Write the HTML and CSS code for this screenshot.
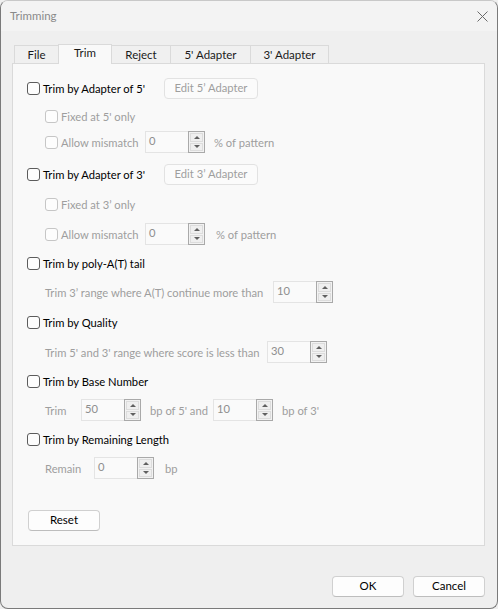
FILE: index.html
```html
<!DOCTYPE html>
<html>
<head>
<meta charset="utf-8">
<link rel="stylesheet" href="styles.css">
</head>
<body>
<div class="window">
  <div class="titlebar">
    <span class="title">Trimming</span>
    <svg class="close" width="11" height="11" viewBox="0 0 11 11"><path d="M0.5 0.5 L10.5 10.5 M10.5 0.5 L0.5 10.5" stroke="#6a6a6a" stroke-width="1" fill="none"/></svg>
  </div>
  <div class="tabs">
    <div class="tab w-file">File</div>
    <div class="tab active w-trim">Trim</div>
    <div class="tab w-reject">Reject</div>
    <div class="tab w-a5">5' Adapter</div>
    <div class="tab w-a3">3' Adapter</div>
  </div>
  <div class="panel">
    <div class="row">
      <label class="chk lbl-main"><span class="box"></span><span>Trim by Adapter of 5'</span></label>
      <span class="btn-edit">Edit 5’ Adapter</span>
    </div>
    <div class="row sub mt6">
      <label class="chk dis"><span class="box"></span><span>Fixed at 5' only</span></label>
    </div>
    <div class="row sub mt4">
      <label class="chk dis lbl-mis"><span class="box"></span><span>Allow mismatch</span></label>
      <div class="spin"><span class="field">0</span><span class="btns"><span class="up"></span><span class="down"></span></span></div>
      <span class="txt ml9">% of pattern</span>
    </div>

    <div class="row mt10">
      <label class="chk lbl-main"><span class="box"></span><span>Trim by Adapter of 3'</span></label>
      <span class="btn-edit">Edit 3’ Adapter</span>
    </div>
    <div class="row sub mt8">
      <label class="chk dis"><span class="box"></span><span>Fixed at 3’ only</span></label>
    </div>
    <div class="row sub mt8">
      <label class="chk dis lbl-mis"><span class="box"></span><span>Allow mismatch</span></label>
      <div class="spin"><span class="field">0</span><span class="btns"><span class="up"></span><span class="down"></span></span></div>
      <span class="txt ml9b">% of pattern</span>
    </div>

    <div class="row mt7">
      <label class="chk"><span class="box"></span><span>Trim by poly-A(T) tail</span></label>
    </div>
    <div class="row sub mt7">
      <span class="txt lbl-poly">Trim 3’ range where A(T) continue more than</span>
      <div class="spin"><span class="field">10</span><span class="btns"><span class="up"></span><span class="down"></span></span></div>
    </div>

    <div class="row mt8">
      <label class="chk"><span class="box"></span><span>Trim by Quality</span></label>
    </div>
    <div class="row sub mt8">
      <span class="txt lbl-qual">Trim 5' and 3' range where score is less than</span>
      <div class="spin"><span class="field">30</span><span class="btns"><span class="up"></span><span class="down"></span></span></div>
    </div>

    <div class="row mt7">
      <label class="chk"><span class="box"></span><span>Trim by Base Number</span></label>
    </div>
    <div class="row sub mt7">
      <span class="txt lbl-trim">Trim</span>
      <div class="spin"><span class="field">50</span><span class="btns"><span class="up"></span><span class="down"></span></span></div>
      <span class="txt ml9 lbl-bp5">bp of 5' and</span>
      <div class="spin"><span class="field">10</span><span class="btns"><span class="up"></span><span class="down"></span></span></div>
      <span class="txt ml9">bp of 3'</span>
    </div>

    <div class="row mt7">
      <label class="chk"><span class="box"></span><span>Trim by Remaining Length</span></label>
    </div>
    <div class="row sub mt7">
      <span class="txt lbl-remain">Remain</span>
      <div class="spin"><span class="field">0</span><span class="btns"><span class="up"></span><span class="down"></span></span></div>
      <span class="txt ml11">bp</span>
    </div>

    <div class="reset-row">
      <span class="btn">Reset</span>
    </div>
  </div>
  <div class="footer">
    <span class="btn">OK</span>
    <span class="btn">Cancel</span>
  </div>
</div>
</body>
</html>
```

FILE: styles.css
```css
* { box-sizing: border-box; }
html, body { margin: 0; padding: 0; background: #efefef; }
body {
  font-family: Lato, "Noto Sans", sans-serif;
  font-size: 11.2px;
  color: #000;
}
.window {
  width: 498px;
  height: 609px;
  border: 1px solid #7a7a7a;
  border-top-color: #c8c8c8;
  border-radius: 8px;
  background: #efefef;
  overflow: hidden;
  display: flex;
  flex-direction: column;
}
.titlebar {
  height: 30px;
  background: #f3f3f3;
  display: flex;
  align-items: center;
  justify-content: space-between;
  padding: 0 9px 0 9px;
  flex: none;
}
.title { color: #8a8a8a; line-height: 16px; font-size: 11.5px; }
.close { display: block; }

.tabs {
  display: flex;
  align-items: flex-end;
  height: 20px;
  margin-top: 12px;
  padding-left: 13px;
  flex: none;
}
.tab {
  height: 18px;
  border: 1px solid #dadada;
  border-bottom: none;
  background: #f0f0f0;
  color: #1a1a1a;
  display: flex;
  align-items: center;
  justify-content: center;
  margin-left: -1px;
  line-height: 16px;
  padding-top: 0;
  font-size: 11.5px;
}
.tab:first-child { margin-left: 0; }
.tab.active {
  height: 20px;
  background: #f9f9f9;
  position: relative;
  z-index: 1;
  margin-bottom: -1px;
  padding-top: 0;
  padding-bottom: 4px;
}
.w-file { width: 45px; }
.w-trim { width: 54px; }
.w-reject { width: 60px; }
.w-a5 { width: 81px; }
.w-a3 { width: 79px; }

.panel {
  margin: 0 12px 0 11px;
  height: 483px;
  border: 1px solid #dadada;
  background: #f9f9f9;
  padding: 13px 0 0 14px;
  flex: none;
}
.row {
  display: flex;
  align-items: center;
  height: 22px;
}
.sub { padding-left: 18px; }
.mt4 { margin-top: 4px; }
.mt6 { margin-top: 6px; }
.mt7 { margin-top: 7px; }
.mt8 { margin-top: 8px; }
.mt10 { margin-top: 10px; }

.chk {
  display: flex;
  align-items: center;
  white-space: nowrap;
  color: #000;
  flex: none;
}
.chk .box {
  width: 13px;
  height: 13px;
  border: 1px solid #5c5c5c;
  border-radius: 3px;
  background: #fdfdfd;
  margin-right: 3px;
  flex: none;
}
.chk.dis { color: #9e9e9e; }
.chk.dis .box { border-color: #c6c6c6; }
.lbl-main { width: 137px; }
.lbl-mis { width: 100px; }

.txt { color: #9e9e9e; white-space: nowrap; flex: none; }
.ml9 { margin-left: 9px; }
.ml9b { margin-left: 11px; }
.ml11 { margin-left: 11px; }
.lbl-poly { width: 228px; }
.lbl-qual { width: 222px; }
.lbl-trim { width: 36px; }
.lbl-bp5 { width: 63px; }
.lbl-remain { width: 49px; }

.btn-edit {
  width: 94px;
  height: 21px;
  border: 1px solid #e2e2e2;
  border-radius: 4px;
  background: #fbfbfb;
  color: #9e9e9e;
  display: flex;
  align-items: center;
  justify-content: center;
  white-space: nowrap;
  flex: none;
  padding-bottom: 1px;
}

.spin {
  width: 60px;
  height: 22px;
  display: flex;
  flex: none;
}
.spin .field {
  flex: 1;
  border: 1px solid #e4e4e4;
  border-right: none;
  background: #fafafa;
  color: #8e8e8e;
  padding: 1px 0 0 3px;
  line-height: 15px;
}
.spin .btns {
  width: 17px;
  border: 1px solid #a9a9a9;
  display: flex;
  flex-direction: column;
  padding: 1px;
  gap: 1px;
  background: #f2f2f2;
}
.spin .up, .spin .down {
  flex: 1;
  border: 1px solid #dcdcdc;
  background: #efefef;
  display: flex;
  align-items: center;
  justify-content: center;
}
.spin .up::after {
  content: "";
  border-left: 3px solid transparent;
  border-right: 3px solid transparent;
  border-bottom: 3px solid #606060;
}
.spin .down::after {
  content: "";
  border-left: 3px solid transparent;
  border-right: 3px solid transparent;
  border-top: 3px solid #606060;
}

.reset-row { margin-top: 31px; padding-left: 1px; display: flex; }
.btn {
  width: 72px;
  height: 21px;
  border: 1px solid #d0d0d0;
  border-bottom-color: #bdbdbd;
  border-radius: 4px;
  background: #fdfdfd;
  color: #000;
  display: flex;
  align-items: center;
  justify-content: center;
  font-size: 11.5px;
  padding-bottom: 2px;
}

.footer {
  display: flex;
  justify-content: flex-end;
  gap: 9px;
  padding-right: 12px;
  margin-top: 30px;
}
```
